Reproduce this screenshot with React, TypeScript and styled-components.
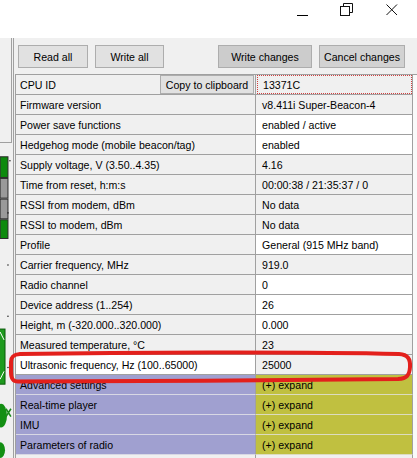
import styled, { createGlobalStyle } from "styled-components";

const GlobalStyle = createGlobalStyle`
  html, body {
    margin: 0;
    padding: 0;
    background: #ffffff;
  }
  body {
    font-family: "Liberation Sans", Arial, sans-serif;
    font-size: 10.6px;
    color: #000000;
  }
`;

type Tone = "gray" | "white" | "purple" | "olive";

const toneColor: Record<Tone, string> = {
  gray: "#f0f0f0",
  white: "#ffffff",
  purple: "#a0a0d0",
  olive: "#c0c040",
};

type Row = {
  name: string;
  value: string;
  nameTone?: Tone;
  valueTone: Tone;
  copy?: boolean;
  focused?: boolean;
};

const rows: Row[] = [
  { name: "CPU ID", value: "13371C", valueTone: "gray", copy: true, focused: true },
  { name: "Firmware version", value: "v8.411i Super-Beacon-4", valueTone: "gray" },
  { name: "Power save functions", value: "enabled / active", valueTone: "white" },
  { name: "Hedgehog mode (mobile beacon/tag)", value: "enabled", valueTone: "white" },
  { name: "Supply voltage, V (3.50..4.35)", value: "4.16", valueTone: "gray" },
  { name: "Time from reset, h:m:s", value: "00:00:38 / 21:35:37 / 0", valueTone: "gray" },
  { name: "RSSI from modem, dBm", value: "No data", valueTone: "gray" },
  { name: "RSSI to modem, dBm", value: "No data", valueTone: "gray" },
  { name: "Profile", value: "General (915 MHz band)", valueTone: "white" },
  { name: "Carrier frequency, MHz", value: "919.0", valueTone: "gray" },
  { name: "Radio channel", value: "0", valueTone: "white" },
  { name: "Device address (1..254)", value: "26", valueTone: "white" },
  { name: "Height, m (-320.000..320.000)", value: "0.000", valueTone: "white" },
  { name: "Measured temperature, °C", value: "23", valueTone: "gray" },
  { name: "Ultrasonic frequency, Hz (100..65000)", value: "25000", nameTone: "white", valueTone: "gray" },
  { name: "Advanced settings", value: "(+) expand", nameTone: "purple", valueTone: "olive" },
  { name: "Real-time player", value: "(+) expand", nameTone: "purple", valueTone: "olive" },
  { name: "IMU", value: "(+) expand", nameTone: "purple", valueTone: "olive" },
  { name: "Parameters of radio", value: "(+) expand", nameTone: "purple", valueTone: "olive" },
  { name: "", value: "", valueTone: "gray" },
];

export default function App() {
  return (
    <>
      <GlobalStyle />
      <Window>
        <TitleBar>
          <MinimizeButton />
          <CaptionButton>
            <svg width="13" height="13" viewBox="0 0 13 13">
              <rect x="0.5" y="3.5" width="9" height="9" fill="none" stroke="#111" />
              <path d="M3.5 3.5 V0.5 H12.5 V9.5 H9.5" fill="none" stroke="#111" />
            </svg>
          </CaptionButton>
          <CaptionButton>
            <svg width="12" height="12" viewBox="0 0 12 12">
              <path d="M0.5 0.5 L11 11 M11 0.5 L0.5 11" stroke="#111" strokeWidth="1" />
            </svg>
          </CaptionButton>
        </TitleBar>

        <Body>
          <LeftStrip>
            <StripBox />
            <svg width="12" height="320" viewBox="0 0 12 320">
              <rect x="0" y="14" width="8" height="21" fill="#0d8a0d" stroke="#2a2a2a" />
              <rect x="0" y="36" width="8" height="20" fill="#9a9a9a" stroke="#2a2a2a" />
              <rect x="0" y="57" width="8" height="20" fill="#9a9a9a" stroke="#2a2a2a" />
              <rect x="0" y="78" width="8" height="19" fill="#0d8a0d" stroke="#2a2a2a" />
              <circle cx="10" cy="18" r="0.8" fill="#222" />
              <circle cx="8" cy="71" r="0.8" fill="#222" />
              <circle cx="8" cy="124" r="0.8" fill="#222" />
              <circle cx="8" cy="176" r="0.8" fill="#222" />
              <circle cx="8" cy="228" r="0.8" fill="#222" />
              <rect x="-2" y="189" width="7" height="56" fill="#1e9a1e" stroke="#0a5a0a" />
              <path d="M0 192 L4 200 M4 232 L0 240" stroke="#ffffff" strokeWidth="1" />
              <ellipse cx="1" cy="277" rx="6" ry="12" fill="#138f13" />
              <path d="M6 270 L11 278 M11 270 L6 278" stroke="#1a8a1a" strokeWidth="1.6" />
              <ellipse cx="0" cy="312" rx="5" ry="8" fill="#138f13" />
            </svg>
          </LeftStrip>

          <Main>
            <Toolbar>
              <ToolButton $width={70}>Read all</ToolButton>
              <ToolButton $width={69}>Write all</ToolButton>
              <Spacer />
              <ToolButton $width={94} $tone="#cccccc">Write changes</ToolButton>
              <ToolButton $width={86} $tone="#d2d2d2">Cancel changes</ToolButton>
            </Toolbar>

            <Grid>
              {rows.map((row, i) => (
                <GridRow key={i}>
                  <NameCell $tone={row.nameTone ?? "gray"} $purple={row.nameTone === "purple"}>
                    <span>{row.name}</span>
                    {row.copy && <CopyButton>Copy to clipboard</CopyButton>}
                  </NameCell>
                  <ValueCell $tone={row.valueTone} $purple={row.valueTone === "olive"}>
                    {row.focused ? <FocusBox>{row.value}</FocusBox> : row.value}
                  </ValueCell>
                </GridRow>
              ))}
            </Grid>
          </Main>
        </Body>

        <Highlight width="417" height="458" viewBox="0 0 417 458">
          <path
            d="M20 354 C120 352.5 300 351.5 399 354 C408 354.5 410.5 359 410 367 C409.5 375 407 378.5 398 379 C300 380 120 381.5 18 381.5 C13 381.5 11 379 11 372 L11 362 C11 357 13 354.5 20 354 Z"
            fill="none"
            stroke="#e3201c"
            strokeWidth="4"
          />
        </Highlight>
      </Window>
    </>
  );
}

const Window = styled.div`
  position: relative;
  width: 417px;
  height: 458px;
  overflow: hidden;
  display: flex;
  flex-direction: column;
  background: #ffffff;
`;

const TitleBar = styled.div`
  height: 38px;
  flex: none;
  display: flex;
  justify-content: flex-end;
  align-items: flex-start;
  padding-right: 2px;
  background: #ffffff;
`;

const CaptionButton = styled.div`
  width: 46px;
  height: 19px;
  display: flex;
  align-items: center;
  justify-content: center;
`;

const MinimizeButton = styled.div`
  width: 46px;
  height: 19px;
  flex: none;
  box-sizing: border-box;
  padding: 15px 15px 0 20px;

  &::after {
    content: "";
    display: block;
    height: 1px;
    background: #000000;
  }
`;

const Body = styled.div`
  flex: 1;
  display: flex;
  background: #f0f0f0;
  min-height: 0;
`;

const LeftStrip = styled.div`
  width: 12px;
  flex: none;
  display: flex;
  flex-direction: column;
  margin-right: 1px;
`;

const StripBox = styled.div`
  height: 104px;
  flex: none;
  border-right: 1px solid #a0a0a0;
  border-bottom: 1px solid #a0a0a0;
  background: #f0f0f0;
`;

const Main = styled.div`
  flex: 1;
  display: flex;
  flex-direction: column;
  border-left: 1px solid #a0a0a0;
  min-width: 0;
`;

const Toolbar = styled.div`
  height: 36px;
  flex: none;
  display: flex;
  align-items: flex-start;
  gap: 7px;
  padding: 7px 12px 0 4px;
  box-sizing: border-box;
  background: #f0f0f0;
`;

const Spacer = styled.div`
  flex: 1;
  margin-left: -4px;
`;

const ToolButton = styled.button<{ $width: number; $tone?: string }>`
  width: ${(p) => p.$width}px;
  height: 23px;
  margin: 0;
  padding: 0;
  border: 1px solid #adadad;
  background: ${(p) => p.$tone ?? "#e1e1e1"};
  font-family: "Liberation Sans", Arial, sans-serif;
  font-size: 10.6px;
  color: #000000;
`;

const Grid = styled.div`
  margin-left: 1px;
  border-top: 1px solid #a0a0a0;
  border-left: 1px solid #a0a0a0;
  background: #fafafa;
  flex: 1;
`;

const GridRow = styled.div`
  display: grid;
  grid-template-columns: 240px 157px;
  height: 20px;
`;

const NameCell = styled.div<{ $tone: Tone; $purple: boolean }>`
  display: flex;
  align-items: center;
  justify-content: space-between;
  padding-left: 4px;
  background: ${(p) => toneColor[p.$tone]};
  border-right: 1px solid #a0a0a0;
  border-bottom: 1px solid ${(p) => (p.$purple ? "#d8d8e4" : "#a0a0a0")};
  white-space: nowrap;
  overflow: hidden;
`;

const ValueCell = styled.div<{ $tone: Tone; $purple: boolean }>`
  display: flex;
  align-items: center;
  padding-left: 6px;
  background: ${(p) => toneColor[p.$tone]};
  border-right: 1px solid #a0a0a0;
  border-bottom: 1px solid ${(p) => (p.$purple ? "#dcdcc0" : "#a0a0a0")};
  white-space: nowrap;
  overflow: hidden;
`;

const FocusBox = styled.div`
  align-self: stretch;
  display: flex;
  align-items: center;
  margin-left: -5px;
  padding-left: 5px;
  flex: 1;
  border: 1px dotted #d04040;
`;

const CopyButton = styled.button`
  height: 19px;
  width: 94px;
  margin: 0 1px 0 0;
  padding: 0;
  border: 1px solid #adadad;
  background: #e1e1e1;
  font-family: "Liberation Sans", Arial, sans-serif;
  font-size: 10.6px;
  color: #000000;
`;

const Highlight = styled.svg`
  position: absolute;
  left: 0;
  top: 0;
  pointer-events: none;
`;
